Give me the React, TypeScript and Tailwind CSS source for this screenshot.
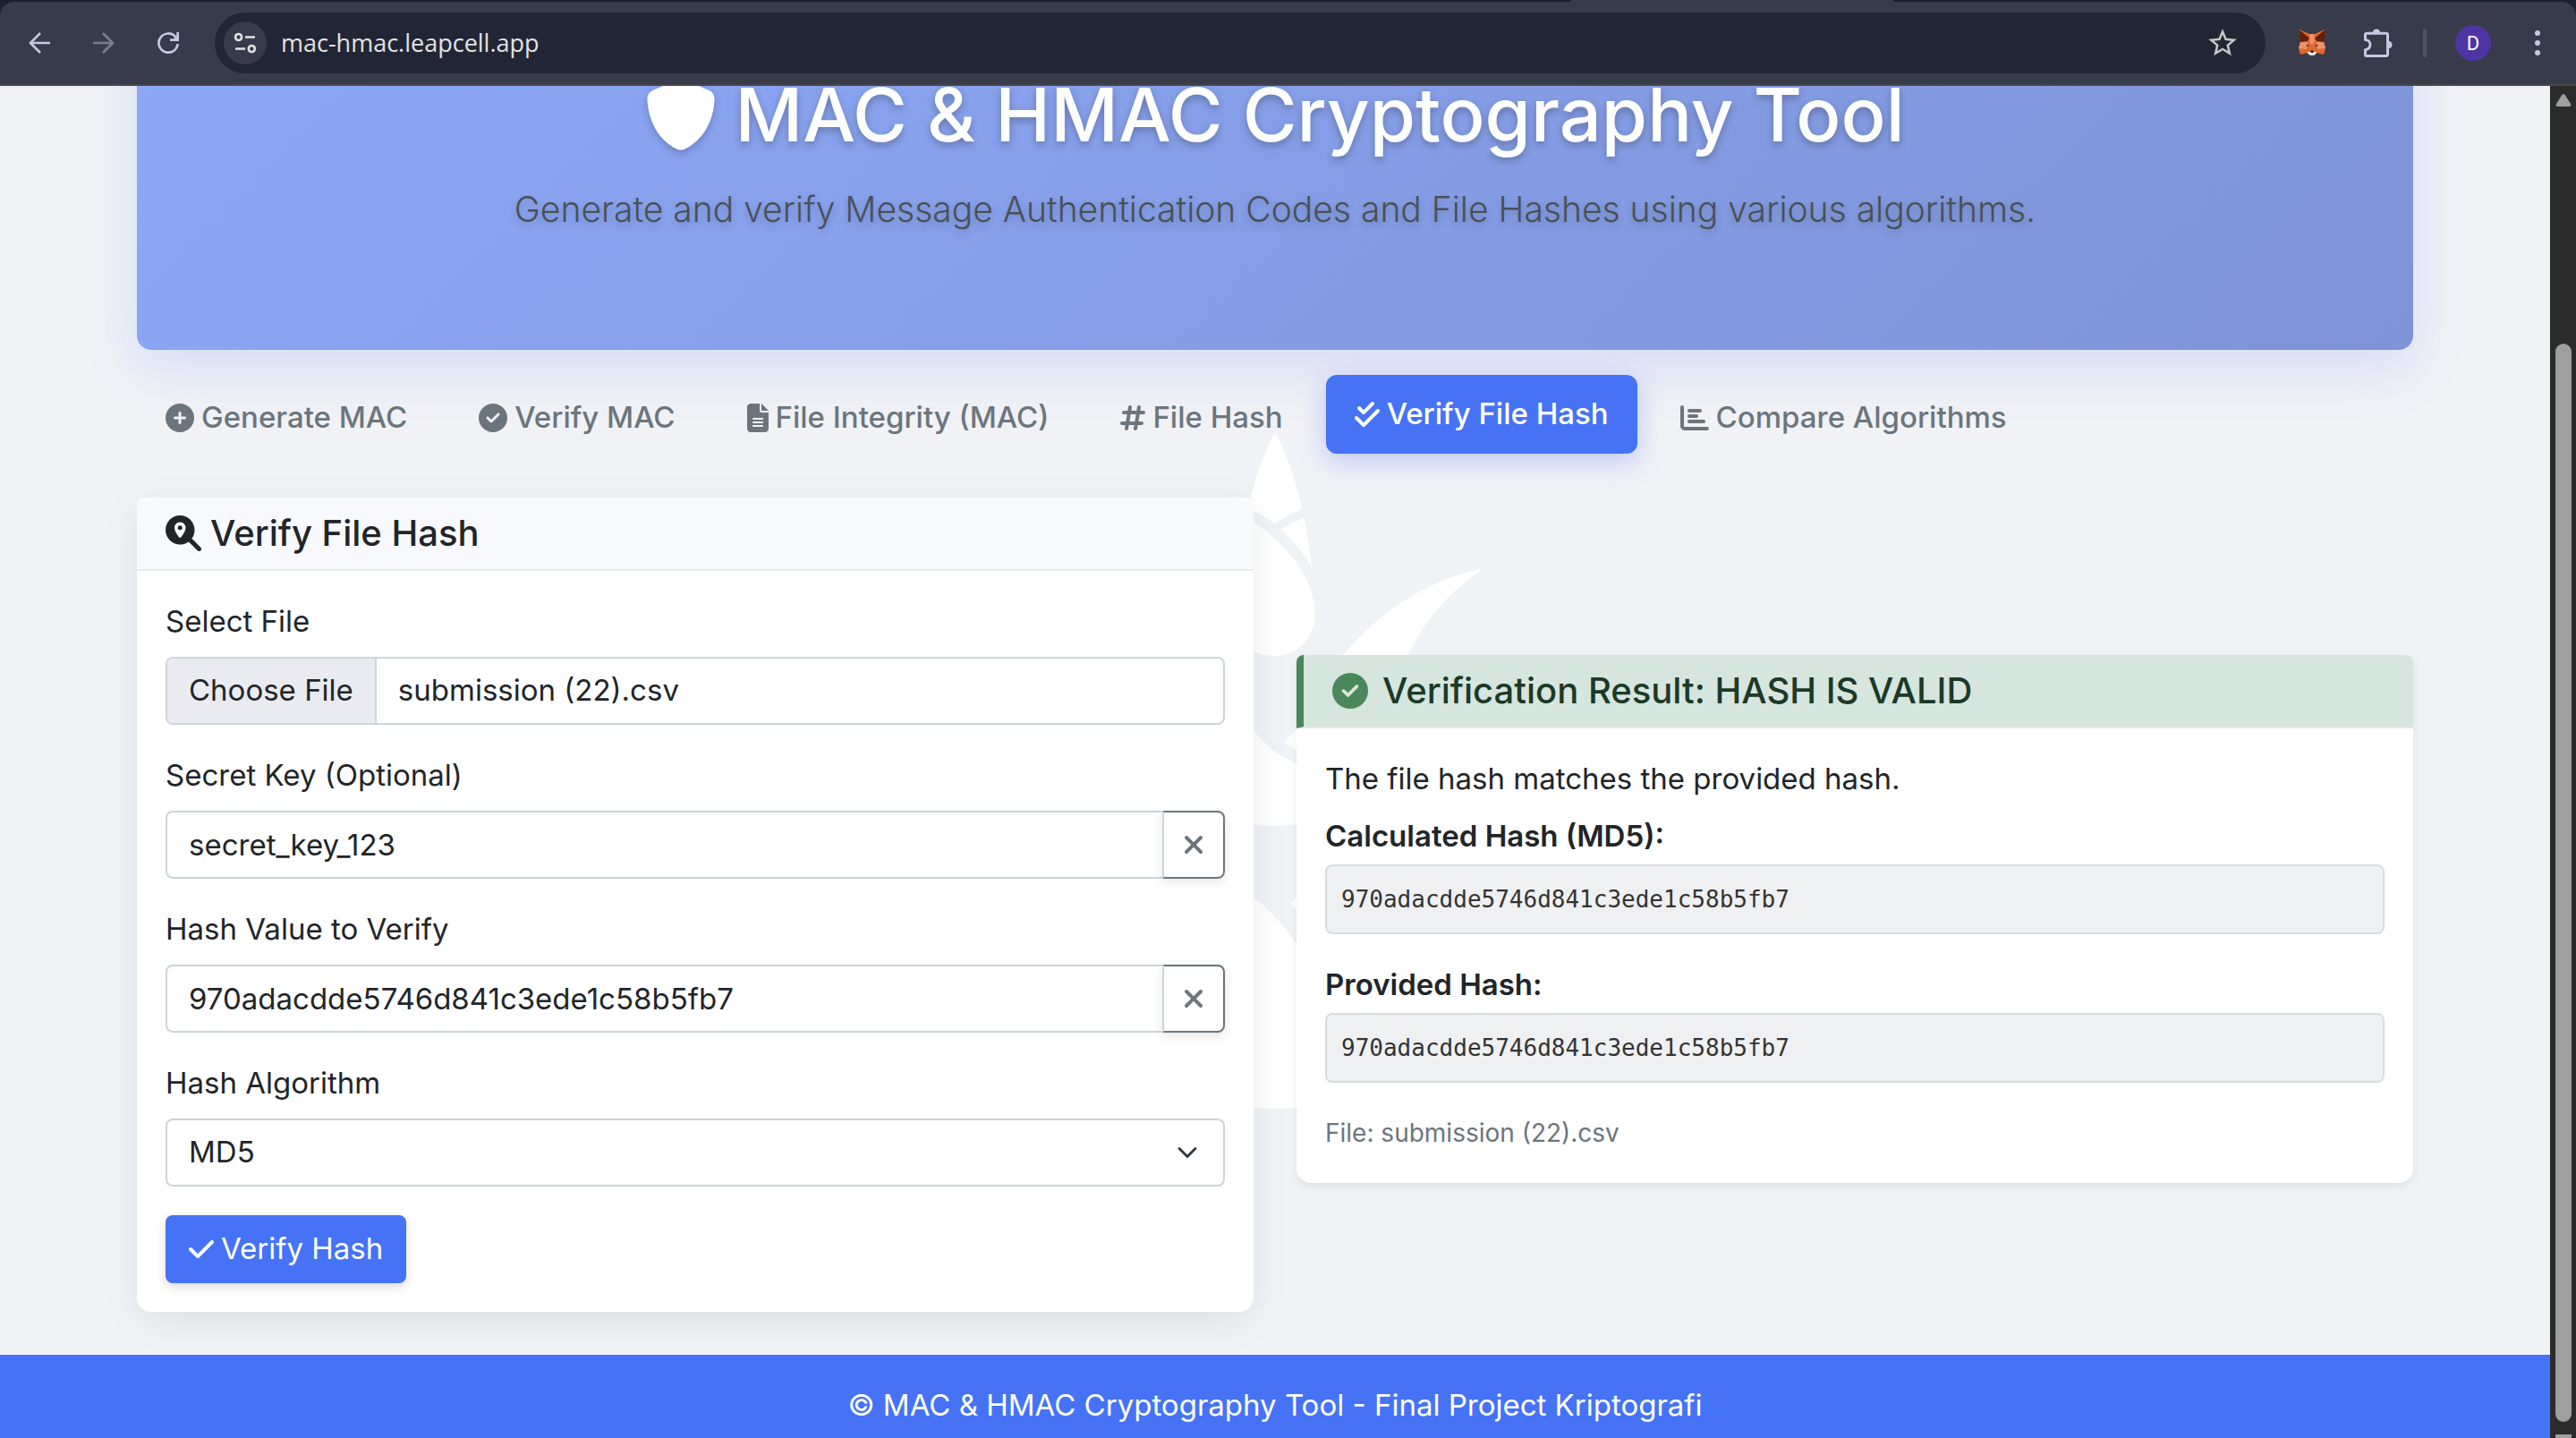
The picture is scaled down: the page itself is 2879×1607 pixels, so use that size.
import React, { useState } from "react";
import {
  FaCirclePlus,
  FaCircleCheck,
  FaFileLines,
  FaHashtag,
  FaCheckDouble,
  FaChartBar,
  FaMagnifyingGlassLocation,
  FaXmark,
  FaCheck,
  FaShield,
} from "react-icons/fa6";
import { MdStarBorder } from "react-icons/md";

const HASH = "970adacdde5746d841c3ede1c58b5fb7";

const TABS = [
  { label: "Generate MAC", Icon: FaCirclePlus, size: "h-8 w-8" },
  { label: "Verify MAC", Icon: FaCircleCheck, size: "h-8 w-8" },
  { label: "File Integrity (MAC)", Icon: FaFileLines, size: "h-8 w-6" },
  { label: "File Hash", Icon: FaHashtag, size: "h-8 w-7" },
  { label: "Verify File Hash", Icon: FaCheckDouble, size: "h-8 w-7" },
  { label: "Compare Algorithms", Icon: FaChartBar, size: "h-8 w-8" },
];

function BackIcon() {
  return (
    <svg viewBox="0 0 24 24" className="size-6" fill="none" stroke="currentColor" strokeWidth="2.7">
      <path d="M24 12H2M13 1L2 12l11 11" />
    </svg>
  );
}

function ForwardIcon() {
  return (
    <svg viewBox="0 0 24 24" className="size-6" fill="none" stroke="currentColor" strokeWidth="2.7">
      <path d="M0 12h22M11 1l11 11-11 11" />
    </svg>
  );
}

function ReloadIcon() {
  return (
    <svg viewBox="0 0 24 24" className="size-6" fill="none" stroke="currentColor" strokeWidth="2.7">
      <path d="M22.600 13A10.600 10.600 0 1 1 20.200 5.300" />
      <path d="M22.650 0v8.600H14" />
      <path d="M18 8l4-4v4z" fill="currentColor" strokeWidth="1" />
    </svg>
  );
}

function SiteInfoIcon() {
  return (
    <svg viewBox="0 0 24 24" className="size-6" fill="none" stroke="currentColor" strokeWidth="2.6">
      <circle cx="4.600" cy="5.500" r="3.500" />
      <path d="M12 5.500h11M1 18.500h11" />
      <circle cx="19.300" cy="18.500" r="3.500" />
    </svg>
  );
}

function FoxIcon() {
  return (
    <svg viewBox="-1 -1 32 32" className="size-8">
      <path d="M1 0l11 5h6l11-5 1 8-2 6 2 7-2 7-8-2-5 3-5-3-8 2-2-7 2-7-2-6z" fill="#e2662f" />
      <path d="M1 0.500l11 9-2.500 4L2 14 0 8zM29 0.500l-11 9 2.500 4L28 14l2-6z" fill="#5f200e" />
      <path d="M2 14l7.500-0.500 1 5L8 22l-8-1zM28 14l-7.500-0.500-1 5L22 22l8-1zM12.500 5h5v10l-2.500 2-2.500-2z" fill="#ec9468" />
      <path d="M8.500 16.500l3.500 2-2.800 0.400zM21.500 16.500l-3.500 2 2.800 0.400z" fill="#2b2320" />
      <path d="M9.500 26l3-1.500h5l3 1.500-3 2.800h-5z" fill="#f4f1ee" />
      <path d="M13 23.500h4l-0.700 2.600h-2.600z" fill="#2b1a14" />
    </svg>
  );
}

function PuzzleIcon() {
  return (
    <svg viewBox="0 0 32 32" className="size-8">
      <path
        d="M3 5.200H25a1.500 1.500 0 0 1 1.500 1.500V29a1.500 1.500 0 0 1-1.500 1.500H3A1.500 1.500 0 0 1 1.500 29V23.500a5.500 5.500 0 0 0 0-11V6.700A1.500 1.500 0 0 1 3 5.200z"
        fill="none"
        stroke="currentColor"
        strokeWidth="3"
        strokeLinejoin="round"
      />
      <path d="M10 4.500a4 4 0 0 1 8 0zM27.500 14a4 4 0 0 1 0 8z" fill="currentColor" />
    </svg>
  );
}

function DotsIcon() {
  return (
    <svg viewBox="0 0 6 28" className="h-7 w-1.5" fill="currentColor">
      <circle cx="3" cy="3" r="3" />
      <circle cx="3" cy="14" r="3" />
      <circle cx="3" cy="25" r="3" />
    </svg>
  );
}

const toolBtn = "flex size-10 items-center justify-center";

function BrowserBar() {
  return (
    <header className="h-24 shrink-0 bg-[#1b2030]">
      <div className="h-0.5">
        <div className="ml-[61%] h-full w-[360px] bg-[#373b4a]" />
      </div>
      <div className="flex h-[94px] items-center rounded-t-2xl border-b-2 border-b-[#45474a] bg-[#373b4a] pr-[23px] pl-6 text-[#c3c9e0]">
        <button aria-label="Back" className={toolBtn}><BackIcon /></button>
        <button aria-label="Forward" className={"ml-8 text-[#7b7e8a] " + toolBtn}><ForwardIcon /></button>
        <button aria-label="Reload" className={"ml-8 " + toolBtn}><ReloadIcon /></button>
        <div className="ml-8 flex h-[68px] flex-1 items-center rounded-full bg-[#212635] pr-[29px] pl-[10px]">
          <button aria-label="Site information" className="flex size-12 items-center justify-center rounded-full bg-[#373b4a] text-[#e3e3e3]"><SiteInfoIcon /></button>
          <input aria-label="Address" defaultValue="mac-hmac.leapcell.app" className="ml-4 min-w-0 flex-1 bg-transparent font-['Open_Sans',sans-serif] text-[27px] text-[#e3e3e3] outline-none" />
          <button aria-label="Bookmark" className="text-[38px] text-[#c7c7c7]"><MdStarBorder /></button>
        </div>
        <button aria-label="Wallet" className="ml-9"><FoxIcon /></button>
        <button aria-label="Extensions" className="ml-[42px]"><PuzzleIcon /></button>
        <span className="ml-[34px] h-8 w-1 rounded bg-[#50545f]" />
        <button aria-label="Profile" className={"ml-8 rounded-full bg-[#4f35a3] font-['Roboto',sans-serif] text-[22px] text-white " + toolBtn}>D</button>
        <button aria-label="Menu" className={"ml-8 " + toolBtn}><DotsIcon /></button>
      </div>
    </header>
  );
}

function Lotus() {
  return (
    <svg
      viewBox="1175 480 500 780"
      className="absolute -top-[76px] left-1/2 h-[780px] w-[500px] -translate-x-1/2"
      fill="#ffffff"
      aria-hidden="true"
    >
      <path d="M1425 483Q1445 520 1455 569Q1438 575 1425 586Q1412 575 1395 569Q1405 520 1425 483Z" />
      <path d="M1457 579Q1443 584 1432 592Q1452 610 1466 634Q1463 604 1457 579Z" />
      <path d="M1401 583Q1430 603 1448 628Q1469 656 1470 687C1468 716 1450 732 1425 733C1412 733 1405 730 1395 725L1380 640Z" />
      <path d="M1658 635Q1565 655 1500 733H1573Q1600 675 1658 635Z" />
      <path d="M1455 808L1436 829L1455 843Z" />
      <path d="M1395 806Q1415 843 1460 857V919Q1425 927 1390 919Z" />
      <path d="M1455 996L1442 1010L1455 1022Z" />
      <path d="M1395 999Q1432 1023 1460 1073V1237Q1425 1241 1390 1237Z" />
    </svg>
  );
}

const labelCls = "block text-[33px] leading-[48px]";

function ClearableField({ id, label, value }: { id: string; label: string; value: string }) {
  const [text, setText] = useState(value);
  return (
    <div>
      <label htmlFor={id} className={labelCls}>{label}</label>
      <div className="mt-4 flex">
        <input
          id={id}
          value={text}
          onChange={(e) => setText(e.target.value)}
          className="h-[76px] min-w-0 flex-1 rounded-l-lg border-2 border-r-0 border-[#ced4da] bg-white px-6 text-[33px] outline-none"
        />
        <button
          type="button"
          aria-label={"Clear " + label}
          onClick={() => setText("")}
          className="flex w-[70px] items-center justify-center rounded-r-lg border-2 border-[#6c757d] border-l-[#ced4da] bg-white text-[#6c757d] shadow-[0_4px_12px_rgba(0,0,0,0.1)]"
        >
          <FaXmark className="h-8 w-6" />
        </button>
      </div>
    </div>
  );
}

function VerifyForm() {
  return (
    <section className="min-w-0 flex-1 rounded-t-lg rounded-b-2xl bg-white shadow-[0_10px_40px_rgba(0,0,0,0.08)]">
      <h2 className="flex items-center gap-2.5 rounded-t-lg border-b-2 border-[#e9ebee] bg-[#f8f9fc] px-8 py-4 text-[40px] leading-[48px] font-medium">
        <FaMagnifyingGlassLocation /> Verify File Hash
      </h2>
      <form className="flex flex-col gap-8 p-8" onSubmit={(e) => e.preventDefault()}>
        <div>
          <label htmlFor="file" className={labelCls}>Select File</label>
          <div className="relative mt-4 flex h-[76px] items-center overflow-hidden rounded-lg border-2 border-[#ced4da] text-[33px]">
            <span className="flex h-full items-center border-r-2 border-[#ced4da] bg-[#e9ebf0] px-6">Choose File</span>
            <span className="px-6">submission (22).csv</span>
            <input id="file" type="file" className="absolute inset-0 opacity-0" />
          </div>
        </div>
        <ClearableField id="key" label="Secret Key (Optional)" value="secret_key_123" />
        <ClearableField id="hash" label="Hash Value to Verify" value={HASH} />
        <div>
          <label htmlFor="algo" className={labelCls}>Hash Algorithm</label>
          <div className="relative mt-4">
            <select id="algo" className="h-[76px] w-full appearance-none rounded-lg border-2 border-[#ced4da] bg-white px-6 text-[33px] outline-none">
              <option>MD5</option>
              <option>SHA-256</option>
            </select>
            <svg viewBox="0 0 16 16" className="pointer-events-none absolute top-[26px] right-[30px] size-6" fill="none" stroke="#343a40" strokeWidth="2" strokeLinecap="round" strokeLinejoin="round">
              <path d="m2 5 6 6 6-6" />
            </svg>
          </div>
        </div>
        <button className="flex h-[76px] items-center gap-2 self-start rounded-lg bg-[#4673f5] px-[26px] text-[33px] text-white shadow-[0_4px_12px_rgba(0,0,0,0.15)]">
          <FaCheck className="h-8 w-7" /> Verify Hash
        </button>
      </form>
    </section>
  );
}

function HashBox({ label, value }: { label: string; value: string }) {
  return (
    <div className="mb-8">
      <p className="text-[33px] leading-[48px] font-semibold">{label}</p>
      <pre className="mt-2 rounded-lg border-2 border-[#d8dce0] bg-[#eff0f2] p-4 font-['DejaVu_Sans_Mono',monospace] text-[26px] leading-[42px] text-[#333333]">{value}</pre>
    </div>
  );
}

function ResultCard() {
  return (
    <section className="mt-8 min-w-0 flex-1 self-center rounded-t-lg rounded-b-2xl bg-white shadow-[0_4px_8px_rgba(0,0,0,0.075)]">
      <h2 className="flex items-center gap-4 rounded-t-lg border-b-2 border-l-8 border-b-[#e3e9e6] border-l-[#4a875a] bg-[#d6e5de] px-8 py-4 text-[40px] leading-[48px] font-medium text-[#1c3927]">
        <FaCircleCheck className="text-[#4a875a]" /> Verification Result: HASH IS VALID
      </h2>
      <div className="p-8">
        <p className="mb-4 text-[33px] leading-[48px]">The file hash matches the provided hash.</p>
        <HashBox label="Calculated Hash (MD5):" value={HASH} />
        <HashBox label="Provided Hash:" value={HASH} />
        <p className="text-[28px] leading-[48px] text-[#6c757d]">File: submission (22).csv</p>
      </div>
    </section>
  );
}

export default function App() {
  return (
    <div className="flex h-screen flex-col overflow-hidden bg-[#f0f2f6] font-['Inter',sans-serif] text-[#212529]">
      <BrowserBar />
      <div className="flex min-h-0 flex-1">
        <main className="min-w-0 flex-1 overflow-hidden">
          <div className="mx-auto max-w-[2640px] px-12">
            <div className="-mt-28 rounded-2xl bg-linear-135 from-[#8ca8f8] to-[#7e94d6] pt-24 pb-[127px] text-center shadow-[0_20px_60px_rgba(67,97,238,0.15)]">
              <h1 className="flex items-center justify-center gap-5 text-[83px] leading-[96px] font-medium text-white [text-shadow:0_4px_8px_rgba(0,0,0,0.25)]">
                <FaShield className="text-[80px] [filter:drop-shadow(0_4px_4px_rgba(0,0,0,0.2))]" /> MAC &amp; HMAC Cryptography Tool
              </h1>
              <p className="mt-7 text-[39px] leading-[60px] font-light text-[#495057] [text-shadow:0_4px_8px_rgba(0,0,0,0.2)]">
                Generate and verify Message Authentication Codes and File Hashes using various algorithms.
              </p>
            </div>
            <nav className="relative z-10 mt-8 flex gap-4">
              {TABS.map(({ label, Icon, size }) => (
                <button
                  key={label}
                  className={
                    label === "Verify File Hash"
                      ? "-mt-1 mb-1 flex h-[88px] items-center gap-2 rounded-xl bg-[#4673f5] px-8 text-[33px] font-medium text-white shadow-[0_8px_30px_rgba(67,97,238,0.3)]"
                      : "flex h-[88px] items-center gap-2 px-8 text-[33px] font-medium text-[#6c757d]"
                  }
                >
                  <Icon className={size} /> {label}
                </button>
              ))}
            </nav>
            <div className="relative mt-[45px]">
              <Lotus />
              <div className="relative flex items-start gap-12">
                <VerifyForm />
                <ResultCard />
              </div>
            </div>
          </div>
          <footer className="mt-12 bg-[#4673f5] py-8 text-center text-[33px] leading-[48px] text-white">
            © MAC &amp; HMAC Cryptography Tool - Final Project Kriptografi
          </footer>
        </main>
        <aside className="flex w-[29px] flex-col items-center bg-[#2b2b2b]" aria-hidden="true">
          <svg viewBox="0 0 18 14" className="mt-[9px] h-[14px] w-[18px]" fill="#9f9f9f"><path d="M9 0q1 0 2 1.500l6 9.500q1 3-1 3H2q-2 0-1-3L7 1.500Q8 0 9 0z" /></svg>
          <span className="mt-[265px] mb-[14px] w-[18px] flex-1 rounded-full bg-[#9f9f9f]" />
          <span className="h-1 w-[18px] bg-[#9f9f9f]" />
        </aside>
      </div>
    </div>
  );
}
